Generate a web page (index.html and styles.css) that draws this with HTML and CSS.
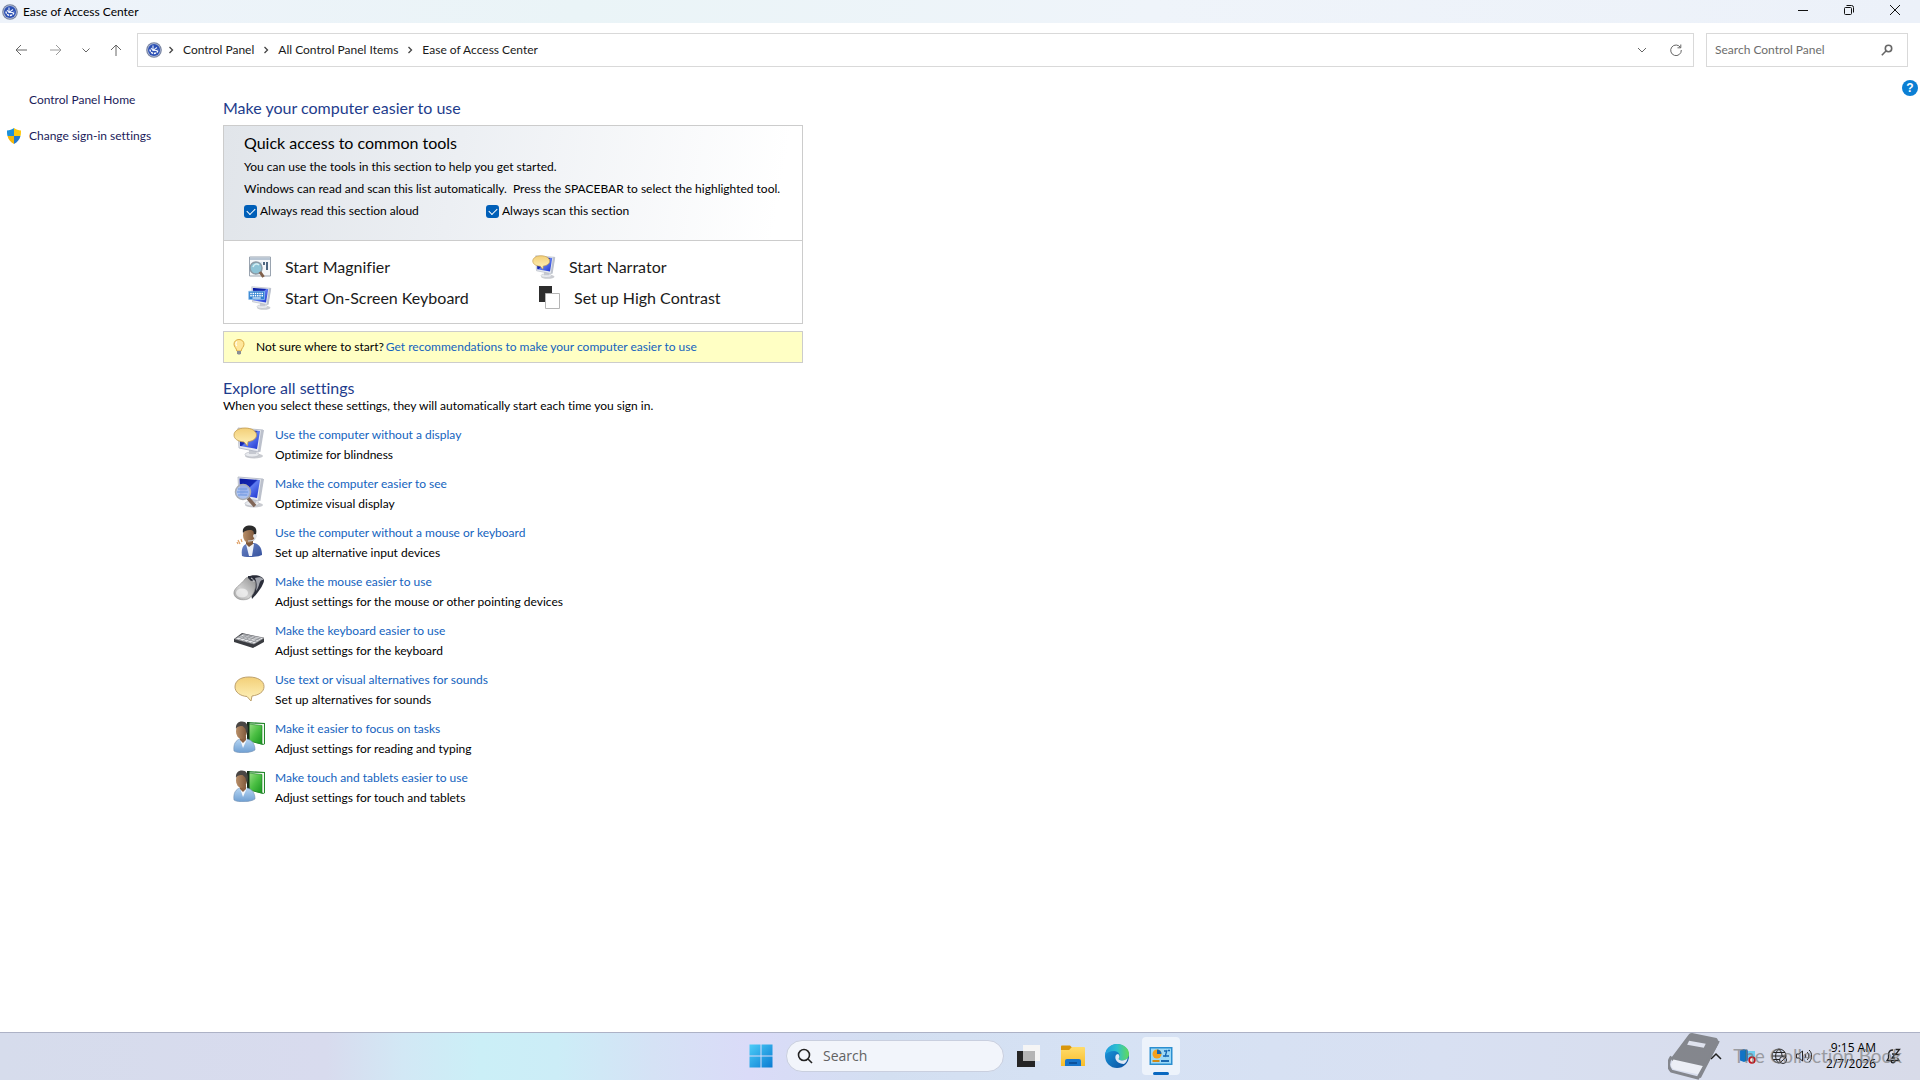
FILE: index.html
```html
<!DOCTYPE html>
<html lang="en">
<head>
	<meta charset="UTF-8">
	<meta name="viewport" content="width=device-width, initial-scale=1.0">
	<title>Ease of Access Center</title>
	<link rel="stylesheet" href="styles.css">
</head>
<body>
	<!-- shared icons -->
	<svg class="defs" aria-hidden="true">
		<defs>
			<linearGradient id="screen" x1="0" y1="0" x2="1" y2="1">
				<stop offset="0" stop-color="#0a1a9c"/><stop offset=".45" stop-color="#1428b4"/><stop offset=".5" stop-color="#5f7cf0"/><stop offset="1" stop-color="#1a30cf"/>
			</linearGradient>
			<linearGradient id="bubble" x1="0" y1="0" x2="0" y2="1">
				<stop offset="0" stop-color="#f3cf78"/><stop offset="1" stop-color="#fff3bd"/>
			</linearGradient>
			<linearGradient id="silver" x1="1" y1="0" x2="0" y2="1">
				<stop offset="0" stop-color="#8c8c8c"/><stop offset=".6" stop-color="#d2d2d2"/><stop offset="1" stop-color="#a2a2a2"/>
			</linearGradient>
			<linearGradient id="green" x1="0" y1="0" x2="1" y2="1">
				<stop offset="0" stop-color="#9ce088"/><stop offset=".5" stop-color="#4cc044"/><stop offset="1" stop-color="#18961f"/>
			</linearGradient>
			<linearGradient id="skin" x1="0" y1="0" x2="1" y2="0">
				<stop offset="0" stop-color="#b98f68"/><stop offset="1" stop-color="#7c563a"/>
			</linearGradient>
			<linearGradient id="shirt" x1="0" y1="0" x2="0" y2="1">
				<stop offset="0" stop-color="#b5d5f3"/><stop offset="1" stop-color="#6f9fd2"/>
			</linearGradient>
			<linearGradient id="navy" x1="0" y1="0" x2="1" y2="1">
				<stop offset="0" stop-color="#6c86c8"/><stop offset="1" stop-color="#34509c"/>
			</linearGradient>
			<linearGradient id="tile" x1="0" y1="0" x2="1" y2="1">
				<stop offset="0" stop-color="#4ccdf8"/><stop offset="1" stop-color="#0a7bd2"/>
			</linearGradient>
			<linearGradient id="edge-blue" x1="0" y1="0" x2="1" y2="1">
				<stop offset="0" stop-color="#1b9de0"/><stop offset="1" stop-color="#0b4c9c"/>
			</linearGradient>
			<linearGradient id="edge-green" x1="0" y1="0" x2="1" y2="0">
				<stop offset="0" stop-color="#1f9be0"/><stop offset=".5" stop-color="#2dc0cf"/><stop offset="1" stop-color="#62da5a"/>
			</linearGradient>
			<linearGradient id="folder" x1="0" y1="0" x2="0" y2="1">
				<stop offset="0" stop-color="#ffdc6b"/><stop offset="1" stop-color="#f8bd2b"/>
			</linearGradient>
		</defs>
		<symbol id="ease" viewBox="0 0 16 16">
			<circle cx="8" cy="8" r="7.8" fill="#76829f"/>
			<circle cx="8" cy="8" r="6.700" fill="#b4c0dd"/>
			<circle cx="8" cy="8" r="6" fill="#2c50b4"/>
			<path d="M4 7.500a4 4 0 0 0 8 0" fill="none" stroke="#fff" stroke-width="1.400" stroke-dasharray="2.200 .800"/>
			<path d="M7 3.500v5M7 8.500h4M5 6l2 2.500 4-3" fill="none" stroke="#e8eefb" stroke-width="1.100"/>
		</symbol>
		<symbol id="monitor" viewBox="0 0 32 32">
			<ellipse cx="21" cy="29" rx="9" ry="2.6" fill="#c9cbd0"/>
			<ellipse cx="19" cy="27.5" rx="7" ry="2.5" fill="#e8eaee" stroke="#b4b7bf" stroke-width=".6"/>
			<path d="m16 22 7 1v4h-7z" fill="#c6c9d1"/>
			<path d="m5 1 25 2-4 22-20-4z" fill="#e6e9ef" stroke="#adb3c0" stroke-width=".8"/>
			<path d="m28 3 3 0-3.600 22-2.400-1z" fill="#bcc1cc"/>
			<path d="m6.500 2.500 20.500 1.500-3 18-17-3z" fill="url(#screen)"/>
		</symbol>
		<symbol id="speak" viewBox="0 0 32 32">
			<use href="#monitor"/>
			<path d="M12 1C5.500 1 1 4 1 8s4 6.500 10 7l3.500 4 .5-4.300c5-.7 8.500-3 8.500-6.700C23.500 4 18.500 1 12 1z" fill="url(#bubble)" stroke="#c29a4c" stroke-width=".8"/>
		</symbol>
		<symbol id="reader" viewBox="0 0 32 32">
			<path d="m15 1 17 1v21l-2 1-14-4z" fill="#23862b"/>
			<path d="m16 2.500 15 .5v20l-13-3z" fill="#f2faf0"/>
			<path d="m15 3 14 1.500V23l-13-3z" fill="url(#green)" stroke="#1b7f22" stroke-width=".6"/>
			<path d="M14 1h2.500v18H14z" fill="#142c18"/>
			<path d="M1 30c-1-7 2-11 6-12h7c5 1 8 5 8 11-4 3-17 4-21 1z" fill="url(#shirt)" stroke="#7390b2" stroke-width=".6"/>
			<path d="m7 18 3 9 4-9z" fill="#f5f8fc"/>
			<path d="M7 15h6v4l-3 3-3-3z" fill="#8b6142"/>
			<ellipse cx="8.500" cy="10.500" rx="5.500" ry="7.500" fill="url(#skin)"/>
			<path d="M3 8C2.500 3 5 .5 9 .5S16 3 14.500 12c-1.500 0-1.500-2-2-4-1-1.500-2-2.500-3-3C7 5 4.500 5 3 8z" fill="#4a4644"/>
		</symbol>
		<symbol id="chev" viewBox="0 0 8 8">
			<path d="M2.500 1 5.500 4l-3 3" fill="none" stroke="#444" stroke-width="1.300"/>
		</symbol>
	</svg>

	<header class="titlebar">
		<svg class="icon16"><use href="#ease"/></svg>
		<span class="title">Ease of Access Center</span>
		<div class="window-buttons">
			<button aria-label="Minimize"><svg class="icon12" viewBox="0 0 12 12"><path d="M1 6.500h10"/></svg></button>
			<button aria-label="Restore"><svg class="icon12" viewBox="0 0 12 12"><rect x="1.500" y="3.500" width="7" height="7" rx="1"/><path d="M3.500 1.500h5a2 2 0 0 1 2 2v5"/></svg></button>
			<button aria-label="Close"><svg class="icon12" viewBox="0 0 12 12"><path d="m1 1 10 10M11 1 1 11"/></svg></button>
		</div>
	</header>

	<nav class="toolbar">
		<div class="nav-buttons">
			<button aria-label="Back"><svg class="icon12" viewBox="0 0 12 12"><path d="M12 6H1M6 1 1 6l5 5"/></svg></button>
			<button class="faded" aria-label="Forward"><svg class="icon12" viewBox="0 0 12 12"><path d="M0 6h11M6 1l5 5-5 5"/></svg></button>
			<button class="recent" aria-label="Recent locations"><svg class="icon12" viewBox="0 0 12 12"><path d="m2.500 4.500 3.500 3.500 3.500-3.500"/></svg></button>
			<button aria-label="Up"><svg class="icon12" viewBox="0 0 12 12"><path d="M6 12V1M1 6l5-5 5 5"/></svg></button>
		</div>
		<div class="address">
			<svg class="icon16"><use href="#ease"/></svg>
			<svg class="chev"><use href="#chev"/></svg>
			<a href="#">Control Panel</a>
			<svg class="chev"><use href="#chev"/></svg>
			<a href="#">All Control Panel Items</a>
			<svg class="chev"><use href="#chev"/></svg>
			<a href="#">Ease of Access Center</a>
			<div class="address-buttons">
				<button aria-label="Previous locations"><svg class="icon12" viewBox="0 0 12 12"><path d="m2 4 4 4 4-4"/></svg></button>
				<button aria-label="Refresh"><svg class="icon12" viewBox="0 0 12 12"><path d="M10.500 3.500A5.300 5.300 0 1 0 11.300 6M10.800.5v3.300H7.500"/></svg></button>
			</div>
		</div>
		<div class="search">
			<input type="text" aria-label="Search Control Panel" placeholder="Search Control Panel">
			<svg class="icon12" viewBox="0 0 12 12"><circle cx="7.500" cy="4.500" r="3.200"/><path d="M5 7 .8 11.200"/></svg>
		</div>
	</nav>

	<div class="page">
		<aside class="sidebar">
			<a href="#">Control Panel Home</a>
			<a href="#" class="signin">
				<svg class="shield" viewBox="0 0 14 16">
					<path d="M0 2.500C2.500 2.500 5 1.500 7 0v8H.500C0 6.500 0 4.500 0 2.500z" fill="#1e90d8"/>
					<path d="M14 2.500C11.500 2.500 9 1.500 7 0v8h6.500c.5-1.500.5-3.500.5-5.500z" fill="#fcc90f"/>
					<path d="M.5 8H7v8C3.500 14 1.300 11.500.5 8z" fill="#f5b70a"/>
					<path d="M13.500 8H7v8c3.500-2 5.700-4.500 6.500-8z" fill="#2579cc"/>
				</svg>
				Change sign-in settings
			</a>
		</aside>

		<main>
			<h1>Make your computer easier to use</h1>
			<section class="quick">
				<div class="quick-head">
					<h2>Quick access to common tools</h2>
					<p>You can use the tools in this section to help you get started.</p>
					<p>Windows can read and scan this list automatically.&nbsp; Press the SPACEBAR to select the highlighted tool.</p>
					<div class="checks">
						<label><input type="checkbox" checked>Always read this section aloud</label>
						<label><input type="checkbox" checked>Always scan this section</label>
					</div>
				</div>
				<div class="tools">
					<a href="#">
						<svg class="icon24" viewBox="0 0 24 24">
							<path d="M1.500 2h21v19h-21z" fill="#f5f7f9" stroke="#9aa4b0"/><path d="M2 2.500h20V5H2z" fill="#b9c6d4"/>
							<path d="M4 7h10v10H4z" fill="#dce8ef"/><path d="M15 7h2v3h-2zm3 0h2v8h-2z" fill="#4f6780"/>
							<circle cx="8" cy="13" r="6" fill="#8dc3d6" stroke="#8b9aa5" stroke-width="1.500"/>
							<path d="M5 12c1-3 4-4 6-2" stroke="#d7f0f5" stroke-width="1.500" fill="none"/>
							<path d="m12 17 3.500 5" stroke="#80604b" stroke-width="3"/>
						</svg>
						Start Magnifier
					</a>
					<a href="#"><svg class="icon24"><use href="#speak"/></svg>Start Narrator</a>
					<a href="#">
						<svg class="icon24" viewBox="0 0 32 32">
							<use href="#monitor"/>
							<path d="M1 7h21v11H1z" fill="#2f80d0" stroke="#8bbdec"/>
							<path d="M3 10h17M3 13h17" stroke="#fff" stroke-width="1.800" stroke-dasharray="2 1"/><path d="M6 16h11" stroke="#fff" stroke-width="1.500"/>
						</svg>
						Start On-Screen Keyboard
					</a>
					<a href="#" class="contrast">
						<svg class="icon24" viewBox="0 0 24 24"><path d="M1 0h13v16H1z" fill="#2d2d2d"/><path d="M7.500 7.500h14v15h-14z" fill="#fff" stroke="#b5b5b5"/></svg>
						Set up High Contrast
					</a>
				</div>
			</section>

			<div class="tip">
				<svg class="bulb" viewBox="0 0 12 16">
					<path d="M6 .5C3 .5 1 2.500 1 5.200 1 8 3.500 9 3.800 12h4.400C8.500 9 11 8 11 5.200 11 2.500 9 .5 6 .5z" fill="#ffe79a" stroke="#dcab45"/>
					<path d="M4 2.500C2.500 3.500 2.500 6 4 7" fill="none" stroke="#fffdf0" stroke-width="1.300"/>
					<path d="M4 12h4v2.500l-1 1H5l-1-1z" fill="#8a8e94"/>
				</svg>
				Not sure where to start? <a href="#">Get recommendations to make your computer easier to use</a>
			</div>

			<h1>Explore all settings</h1>
			<p class="lead">When you select these settings, they will automatically start each time you sign in.</p>

			<ul class="settings">
				<li>
					<svg class="icon32"><use href="#speak"/></svg>
					<div><a href="#">Use the computer without a display</a><p>Optimize for blindness</p></div>
				</li>
				<li>
					<svg class="icon32" viewBox="0 0 32 32">
						<use href="#monitor"/>
						<path d="m15 22 7 8" stroke="#806657" stroke-width="3.500"/>
						<circle cx="10" cy="16" r="7.500" fill="#a9c0ee" fill-opacity=".9" stroke="#a9adb4" stroke-width="1.500"/>
						<path d="M5 13h9M4 16h11M5 19h9" stroke="#6d95e0" stroke-width="1.200"/>
					</svg>
					<div><a href="#">Make the computer easier to see</a><p>Optimize visual display</p></div>
				</li>
				<li>
					<svg class="icon32" viewBox="0 0 32 32">
						<path d="M9 31c-1-8 1-11 6-13h6c6 1 8 6 8 12-4 2-15 3-20 1z" fill="url(#navy)"/>
						<path d="m13 19 3 12h3l2-12z" fill="#eef2fa"/>
						<path d="M13 15h7v4l-4 3-3-3z" fill="#7d573a"/>
						<ellipse cx="16" cy="10.500" rx="6" ry="7.500" fill="url(#skin)"/>
						<path d="M10 8C9 3 12 .5 17 .5S25 4 22.500 11c-2-1-1-4-3-5.500-3-1-7-.5-9.500 2.500z" fill="#2b2b2b"/>
						<path d="M22 11c1 4-2 5-7 5" fill="none" stroke="#d0d3d9" stroke-width="1.200"/><circle cx="22" cy="11" r="2" fill="#e5e7ea"/>
						<path d="m5 15 2 4m1-5 1 3m-4 2-1-2" stroke="#df9f63" stroke-width="1.200" fill="none"/>
					</svg>
					<div><a href="#">Use the computer without a mouse or keyboard</a><p>Set up alternative input devices</p></div>
				</li>
				<li>
					<svg class="icon32" viewBox="0 0 32 32">
						<path d="M15 3C19 0 31 1 31 7c-1 5-7 13-12 18z" fill="#2b2e3a"/>
						<path d="M12 5c2-3 7-2 10 2 2 5-1 15-7 18-6 2-13 0-14-5-1-6 7-9 11-15z" fill="url(#silver)" stroke="#8a8a8a" stroke-width=".6"/>
						<path d="M22 4c5-2 9 0 8 2-2 0-3 1-4 5-1 3-2 5-3 6 1-4 1-9-1-13z" fill="#a0a3ab"/>
						<path d="M15 2h4l3 4-4 1-3-3z" fill="#2b2e3a"/>
						<path d="M18 4c2 1 3 2 3 4" fill="none" stroke="#c9ccd2"/>
						<ellipse cx="9" cy="19" rx="6" ry="4.500" fill="#f5f5f5" opacity=".7"/>
					</svg>
					<div><a href="#">Make the mouse easier to use</a><p>Adjust settings for the mouse or other pointing devices</p></div>
				</li>
				<li>
					<svg class="icon32" viewBox="0 0 32 32">
						<path d="m1 16 8-6 22 5v4l-11 6L1 19z" fill="#3a3c41"/>
						<path d="m2 16 8-5 21 4-10 6z" fill="#e9eaec" stroke="#86888c" stroke-width=".7"/>
						<path d="m5 14 19 5M7 13l19 4M10 12l18 4M6 17l9-5m-5 6 9-5m-5 6 8-5m-4 6 9-5" stroke="#8d8f94" stroke-width=".8"/>
					</svg>
					<div><a href="#">Make the keyboard easier to use</a><p>Adjust settings for the keyboard</p></div>
				</li>
				<li>
					<svg class="icon32" viewBox="0 0 32 32">
						<path d="M16 5C7 5 2 9 2 15c0 5 5 9 12 9.500L18 29l1-5c7-1 12-4 12-9.500C31 9 25 5 16 5z" fill="url(#bubble)" stroke="#bda06c"/>
					</svg>
					<div><a href="#">Use text or visual alternatives for sounds</a><p>Set up alternatives for sounds</p></div>
				</li>
				<li>
					<svg class="icon32"><use href="#reader"/></svg>
					<div><a href="#">Make it easier to focus on tasks</a><p>Adjust settings for reading and typing</p></div>
				</li>
				<li>
					<svg class="icon32"><use href="#reader"/></svg>
					<div><a href="#">Make touch and tablets easier to use</a><p>Adjust settings for touch and tablets</p></div>
				</li>
			</ul>
		</main>

		<button class="help" aria-label="Help">?</button>
	</div>

	<footer class="taskbar">
		<div class="apps">
			<button aria-label="Start">
				<svg class="icon24" viewBox="0 0 24 24"><path d="M.5.500h11v11H.500zm12 0h11v11h-11zm-12 12h11v11H.500zm12 0h11v11h-11z" fill="url(#tile)"/></svg>
			</button>
			<div class="task-search">
				<svg class="icon16" viewBox="0 0 16 16"><circle cx="7" cy="7" r="5.500"/><path d="m11 11 4 4"/></svg>
				<input type="text" aria-label="Search" placeholder="Search">
			</div>
			<button aria-label="Task view">
				<svg class="icon24" viewBox="0 0 24 24"><path d="M6 1h17v16H6z" fill="#f5f5f5"/><path d="M0 7h18v16H0z" fill="#252525"/><path d="M6 7h12v10H6z" fill="#b5b5b5"/></svg>
			</button>
			<button aria-label="File Explorer">
				<svg class="icon24" viewBox="0 0 24 24"><path d="M0 2.500C0 2 .500 1.500 1 1.500h8L11.500 4v3H0z" fill="#d9960b"/><path d="M0 6h8l3-3h12q1 0 1 1v18H0z" fill="url(#folder)"/><path d="M4 22v-5q0-2 2-2h12q2 0 2 2v5z" fill="#1874ca"/><path d="M8 18h8v2H8z" fill="#0c529c"/></svg>
			</button>
			<button aria-label="Edge">
				<svg class="icon24" viewBox="0 0 24 24">
					<circle cx="12" cy="12" r="12" fill="url(#edge-blue)"/>
					<path d="M0 11C1 4 6 0 12 0c7 0 12 4.500 12 10 0 4-3 6.500-6.500 6.500-3 0-4.500-1-3.500-2.500 2-3-.5-7-5-7-4 0-7.500 2-9 4z" fill="url(#edge-green)"/>
					<path d="M14 14c-1 1.500.5 2.500 3.500 2.500 2 0 4-1 5.200-2.500-.5 3-2 5-3.700 6-6 0-9.500-4-8.500-8 .4-1.300 1.500-2 2.500-2 1.500 1 1.800 2.700 1 4z" fill="#dfe8f5"/>
				</svg>
			</button>
			<button class="active" aria-label="Control Panel">
				<svg class="icon24" viewBox="0 0 24 24">
					<path d="M.5 3h23v18H.500z" fill="#2b8fd0"/><path d="M2 4.500h20v15H2z" fill="#9cd9f7"/>
					<circle cx="8" cy="10" r="4.500" fill="#f3a01d"/><path d="M8 10V5.500A4.500 4.500 0 0 1 12.500 10z" fill="#1266b2"/>
					<path d="M15 7h2m2-.5h2M14 12h2m1 0h3M18 6l-2 7" stroke="#1266b2" stroke-width="1.300"/>
					<path d="M3.500 17h7" stroke="#d28b13" stroke-width="2"/><path d="M12 17h8" stroke="#1b6ab2" stroke-width="2"/>
				</svg>
			</button>
		</div>

		<div class="tray">
			<svg class="icon16 line" viewBox="0 0 16 16"><path d="m3 11 5-5 5 5" stroke-width="1.500"/></svg>
			<svg class="icon16 usb" viewBox="0 0 16 16"><path d="M0 2.500 4 1l4 1.500v10L4 14l-4-1.500z" fill="#1173c6"/><path d="m8 3 7 0v8H8z" fill="#6fcdee"/><circle cx="12" cy="12" r="2.800" fill="#fff" stroke="#c4141b" stroke-width="1.800"/></svg>
			<svg class="icon16 globe line" viewBox="0 0 16 16"><circle cx="8" cy="8" r="7"/><path d="M1 8h14M2 4.500h12M2 11.500h7M8 1C3.500 4 3.500 12 8 15M8 1c2 2 3 4 3 7"/><circle cx="12" cy="12" r="3.500" fill="#d8dcee"/><path d="m9.500 14.500 5-5"/></svg>
			<svg class="icon16 line" viewBox="0 0 16 16"><path d="M.500 6h2.500l3.500-3v10L3 10H.500zM9 6c1 1 1 3 0 4M11 4c2.500 2 2.500 6 0 8M13 2c3.500 3 3.500 9 0 12"/></svg>
			<div class="clock"><span>9:15 AM</span><span>2/7/2026</span></div>
			<svg class="icon16 line" viewBox="0 0 16 16"><path d="M8 2C5 2 3.500 4 3.500 7v3L2 12.500h12L12.500 10M6 13c.5 2.500 3.500 2.500 4 0M10.500 1.500h4l-4 5h4M7 6h3l-3 4h3" stroke-width="1.300"/></svg>
		</div>

		<div class="watermark">
			<svg class="book" viewBox="0 0 52 48">
				<path d="M21 1q1-1 3-1l25 5q2 1 1 3L38 34q-1 2-3 2L5 29q-3-1-2-4z" fill="#76787d"/>
				<path d="m21 8 17 3-2 4-17-3z" fill="#e1e4ef"/>
				<path d="M5 27q-5 6 0 10l25 5 6-8z" fill="#f0f2f8"/>
				<path d="M3 24q-6 9 0 15l27 7 21-38" fill="none" stroke="#76787d" stroke-width="3"/>
				<path d="m30 45 6-11 14-27 1 4-18 35z" fill="#76787d"/>
			</svg>
			<span>The Collection Book</span>
		</div>
	</footer>
</body>
</html>
```
FILE: styles.css
```css
:root {
	--text: #1a1a1a;
	--heading: #1e3c8c;
	--link: #1463be;
	--border: #cccccc;
}

* {
	box-sizing: border-box;
	margin: 0;
	padding: 0;
}

body {
	min-height: 100vh;
	display: flex;
	flex-direction: column;
	font-family: Lato, "Open Sans", sans-serif;
	font-size: 12px;
	line-height: 16px;
	font-variant-ligatures: none;
	color: #000;
	background: #fff;
}

button {
	border: none;
	background: none;
	display: flex;
	align-items: center;
	justify-content: center;
}

a {
	color: var(--link);
	text-decoration: none;
}

input {
	font: inherit;
	color: inherit;
	border: none;
	outline: none;
	background: none;
}

h1, h2 {
	font-size: 16px;
	line-height: 20px;
	font-weight: 400;
}

h1 {
	color: var(--heading);
}

svg {
	flex: none;
}

.defs {
	position: absolute;
	width: 0;
	height: 0;
}

.icon12 { width: 12px; height: 12px; }
.icon16 { width: 16px; height: 16px; }
.icon24 { width: 24px; height: 24px; }
.icon32 { width: 32px; height: 32px; }

/* Title bar */
.titlebar {
	height: 23px;
	padding-left: 2px;
	display: flex;
	align-items: center;
	gap: 5px;
	background: linear-gradient(90deg, #eef3fa, #eaf4f7 30%, #eff4fa 60%, #ecf1f9);
}

.window-buttons {
	display: flex;
	align-self: flex-start;
	margin-left: auto;
	margin-right: 2px;
}

.window-buttons button {
	width: 46px;
	height: 20px;
}

.window-buttons svg {
	fill: none;
	stroke: #111;
}

/* Address row */
.toolbar {
	display: flex;
	align-items: center;
	padding: 10px 12px 0 6px;
}

.nav-buttons {
	display: flex;
	width: 131px;
	gap: 5px;
}

.nav-buttons button {
	width: 30px;
	height: 34px;
}

.nav-buttons .recent {
	width: 20px;
}

.nav-buttons svg, .address-buttons svg {
	fill: none;
	stroke: #666;
}

.nav-buttons .faded svg {
	stroke: #9a9a9a;
}

.address, .search {
	height: 34px;
	display: flex;
	align-items: center;
	border: 1px solid #d9d9d9;
}

.address {
	flex: 1;
	padding-left: 8px;
}

.address a {
	color: var(--text);
}

.chev {
	width: 8px;
	height: 8px;
	margin: 0 8px;
}

.address .icon16 + .chev {
	margin-left: 5px;
}

.address-buttons {
	display: flex;
	margin-left: auto;
}

.address-buttons button {
	width: 34px;
	height: 32px;
}

.search {
	width: 202px;
	margin-left: 12px;
	padding: 0 14px 0 8px;
}

.search input {
	flex: 1;
	min-width: 0;
}

.search input::placeholder {
	color: #6d6d6d;
}

.search svg {
	fill: none;
	stroke: #666;
	stroke-width: 1.6;
}

/* Page */
.page {
	flex: 1;
	display: flex;
	align-items: flex-start;
}

.sidebar {
	width: 223px;
	padding: 25px 0 0 29px;
	display: flex;
	flex-direction: column;
	gap: 20px;
}

.sidebar a {
	color: #1b1b5a;
}

.sidebar .signin {
	display: flex;
	align-items: center;
	gap: 8px;
	margin-left: -22px;
}

.shield {
	width: 14px;
	height: 16px;
}

main {
	width: 580px;
	padding-top: 31px;
}

.help {
	width: 16px;
	height: 16px;
	margin: 13px 2px 0 auto;
	border-radius: 50%;
	background: #0b7fd4;
	color: #fff;
	font-size: 12px;
	font-weight: 700;
}

.quick {
	margin-top: 7px;
	border: 1px solid var(--border);
}

.quick-head {
	height: 115px;
	padding: 7px 20px;
	border-bottom: 1px solid var(--border);
	background: linear-gradient(100deg, #e1e5ea, #eceff3 40%, #fff 95%);
}

.quick-head p {
	margin-top: 6px;
	white-space: nowrap;
}

.checks {
	display: grid;
	grid-template-columns: 242px auto;
	margin-top: 6px;
}

.checks label {
	display: flex;
	align-items: center;
	gap: 3px;
}

.checks input {
	appearance: none;
	width: 13px;
	height: 13px;
	border-radius: 3px;
	background: #005fb8;
	display: flex;
	justify-content: center;
}

.checks input:checked::after {
	content: "";
	width: 7px;
	height: 4px;
	margin-top: 3px;
	border: solid #fff;
	border-width: 0 0 1px 1px;
	transform: rotate(-45deg);
}

.tools {
	display: grid;
	grid-template-columns: 284px auto;
	grid-auto-rows: 24px;
	row-gap: 7px;
	padding: 14px 24px 13px;
}

.tools a {
	display: flex;
	align-items: center;
	gap: 13px;
	color: var(--text);
	font-size: 16px;
	line-height: 20px;
}

.tools .contrast {
	padding-left: 6px;
	gap: 12px;
}

.tip {
	display: flex;
	align-items: center;
	height: 32px;
	margin: 7px 0 15px;
	padding-left: 9px;
	border: 1px solid var(--border);
	background: #ffffc4;
}

.tip a {
	margin-left: 2px;
}

.bulb {
	width: 12px;
	height: 16px;
	margin-right: 11px;
}

.lead {
	line-height: 15px;
}

.settings {
	list-style: none;
	padding: 14px 0 0 10px;
	display: flex;
	flex-direction: column;
	gap: 9px;
}

.settings li {
	display: flex;
	gap: 10px;
	height: 40px;
}

.settings p {
	margin-top: 4px;
}

/* Taskbar */
.taskbar {
	position: relative;
	height: 48px;
	padding-bottom: 1px;
	display: grid;
	grid-template-columns: 1fr auto 1fr;
	align-items: center;
	border-top: 1px solid #adb2c6;
	background: linear-gradient(90deg, #d6dcec 0, #d8dbee 17%, #d2e8f5 21%, #cbeff7 25%, #ccedf7 29%, #d5e2f5 34%, #dadbf8 39%, #d3dff1 46%, #d6e2f4 58%, #d8e0f2 75%, #d8dbe9 100%);
}

.apps {
	grid-column: 2;
	display: flex;
	align-items: center;
	padding-left: 2px;
}

.apps button {
	position: relative;
	width: 38px;
	height: 38px;
	margin: 0 3px;
	border-radius: 4px;
}

.apps .active {
	background: #edf3fb;
}

.apps .active::after {
	content: "";
	position: absolute;
	bottom: 0;
	width: 16px;
	height: 3px;
	border-radius: 2px;
	background: #0a68c0;
}

.task-search {
	width: 218px;
	height: 32px;
	margin: 0 3px;
	padding: 0 10px;
	display: flex;
	align-items: center;
	gap: 10px;
	border: 1px solid #c9cfdf;
	border-radius: 16px;
	background: #f2f5fb;
	font-size: 14px;
}

.task-search input {
	min-width: 0;
	flex: 1;
	font-family: "Open Sans", sans-serif;
}

.task-search input::placeholder {
	color: #626262;
}

.task-search svg {
	fill: none;
	stroke: #222;
	stroke-width: 1.6;
}

.tray {
	display: flex;
	align-items: center;
	justify-content: flex-end;
	padding-right: 19px;
}

.tray .usb {
	margin: 0 15px 0 16px;
}

.tray .globe {
	margin-right: 9px;
}

.line {
	fill: none;
	stroke: #222;
}

.clock {
	width: 64px;
	margin-right: 9px;
	display: flex;
	flex-direction: column;
	font-family: "Open Sans", sans-serif;
	text-align: right;
}

.watermark {
	position: absolute;
	right: 18px;
	top: 0;
	display: flex;
	align-items: center;
	gap: 13px;
	height: 47px;
	color: #777;
	font-size: 19px;
	opacity: 0.85;
	pointer-events: none;
}

.book {
	width: 52px;
	height: 47px;
}

.watermark span {
	padding-bottom: 2px;
	opacity: 0.75;
}
```
